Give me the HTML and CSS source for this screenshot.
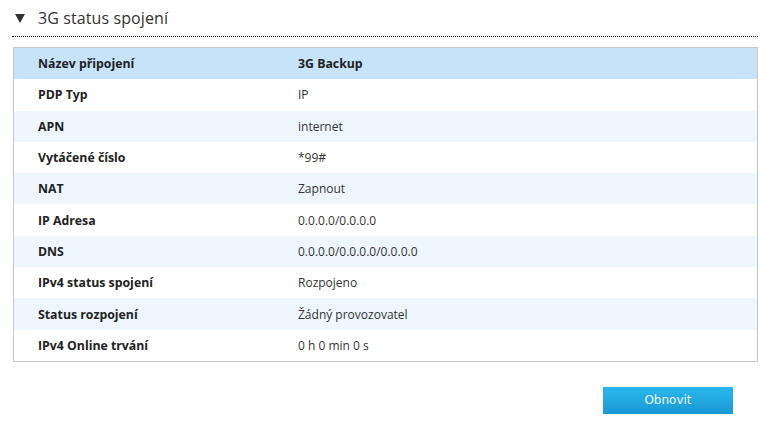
FILE: index.html
```html
<!DOCTYPE html>
<html lang="cs">
<head>
<meta charset="utf-8">
<link rel="stylesheet" href="styles.css">
</head>
<body>
<div class="page">
  <div class="title">
    <svg class="tri" width="10" height="9" viewBox="0 0 10 9"><polygon points="0,0 10,0 5,9" fill="#333"/></svg>
    <span>3G status spojení</span>
  </div>
  <div class="rule"></div>
  <div class="table">
    <div class="row head"><div class="k">Název připojení</div><div class="v">3G Backup</div></div>
    <div class="row"><div class="k">PDP Typ</div><div class="v">IP</div></div>
    <div class="row alt"><div class="k">APN</div><div class="v">internet</div></div>
    <div class="row"><div class="k">Vytáčené číslo</div><div class="v">*99#</div></div>
    <div class="row alt"><div class="k">NAT</div><div class="v">Zapnout</div></div>
    <div class="row"><div class="k">IP Adresa</div><div class="v">0.0.0.0/0.0.0.0</div></div>
    <div class="row alt"><div class="k">DNS</div><div class="v">0.0.0.0/0.0.0.0/0.0.0.0</div></div>
    <div class="row"><div class="k">IPv4 status spojení</div><div class="v">Rozpojeno</div></div>
    <div class="row alt"><div class="k">Status rozpojení</div><div class="v">Žádný provozovatel</div></div>
    <div class="row"><div class="k">IPv4 Online trvání</div><div class="v">0 h 0 min 0 s</div></div>
  </div>
  <div class="actions"><button class="btn">Obnovit</button></div>
</div>
</body>
</html>
```
FILE: styles.css
```css
html, body { margin: 0; padding: 0; background: #fff; }
body { font-family: "Open Sans", "Noto Sans", sans-serif; color: #333; }
.page { padding: 0 6px 0 12px; }
.title { display: flex; align-items: center; height: 36px; padding-left: 3px; }
.tri { margin-right: 13px; margin-top: 1px; }
.title span { font-size: 16px; color: #333; letter-spacing: 0.1px; }
.rule { border-top: 1px dotted #222; }
.table { margin: 10px 0 0 1px; border: 1px solid #c8c8c8; display: grid; grid-template-rows: repeat(10, 31.3px); }
.row { display: grid; grid-template-columns: 260px 1fr; align-items: center; padding-left: 24px; background: #fff; font-size: 12px; }
.row.head { background: #c6e3fa; }
.row.alt { background: #eef7fd; }
.k { font-weight: bold; color: #222; font-size: 12.3px; }
.v { color: #333; }
.row.head .v { font-weight: bold; color: #222; font-size: 12.3px; }
.actions { display: flex; justify-content: flex-end; padding: 25px 25px 0 0; }
.btn { width: 130px; height: 27px; border: 0; background: linear-gradient(#2ab8ee, #1b98d3); color: #eafaff; font-family: "DejaVu Sans", sans-serif; font-size: 12px; padding: 0; }
```
